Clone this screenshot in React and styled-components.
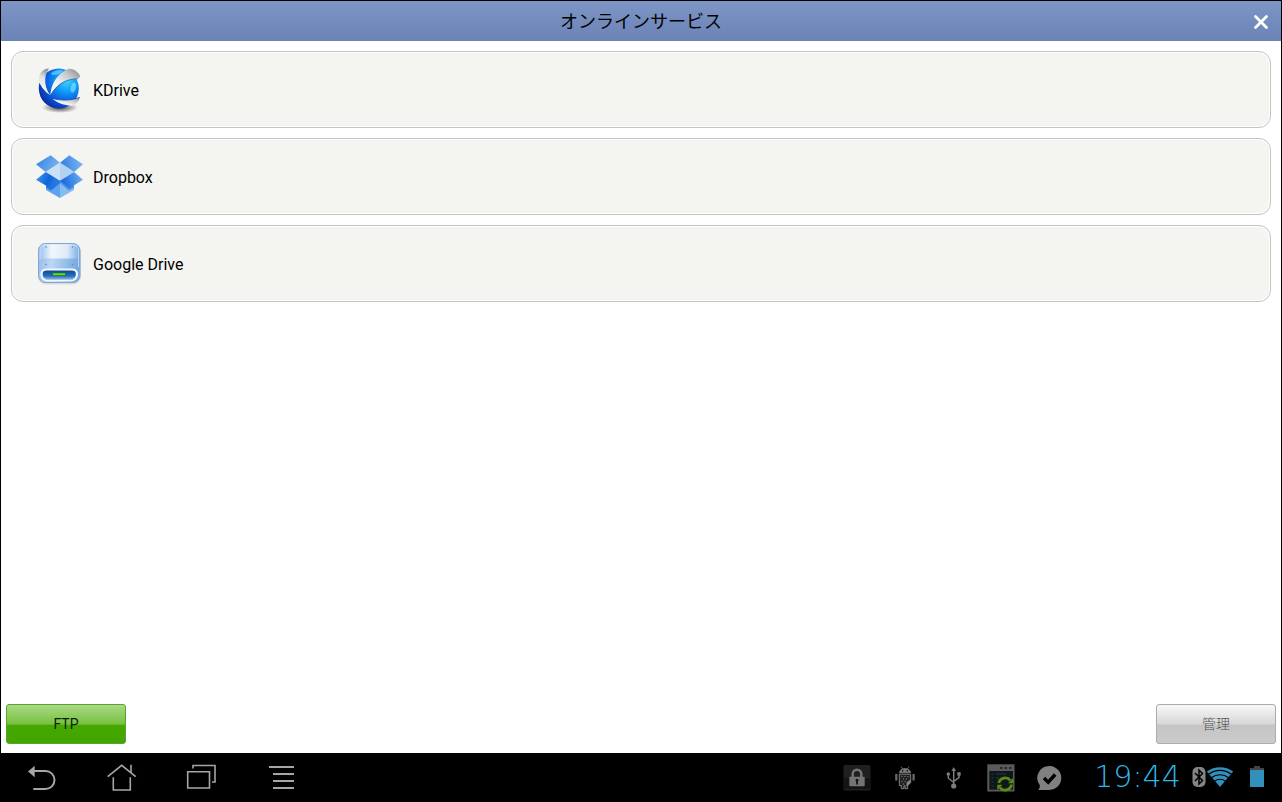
import React from "react";
import styled, { createGlobalStyle } from "styled-components";

const GlobalStyle = createGlobalStyle`
  *, *::before, *::after { box-sizing: border-box; }
  body { margin: 0; background: #000; font-family: Roboto, "Noto Sans CJK JP", sans-serif; }
  button { font-family: inherit; cursor: pointer; }
  button:disabled { cursor: default; }
  svg { display: block; flex: none; }
`;

const Screen = styled.div`
  display: flex;
  flex-direction: column;
  min-height: 100vh;
  border: 1px solid #000;
  background: #fff;
`;

const Header = styled.header`
  display: grid;
  grid-template-columns: 40px 1fr 40px;
  align-items: center;
  height: 40px;
  padding-top: 2px;
  background: linear-gradient(#7e96c5, #6b82b5);
`;

const Title = styled.h1`
  grid-column: 2;
  margin: 0;
  text-align: center;
  font-family: Roboto, "Noto Sans CJK JP", sans-serif;
  font-size: 18px;
  font-weight: 400;
  line-height: 24px;
  color: #000;
`;

const CloseButton = styled.button`
  display: grid;
  place-items: center;
  height: 38px;
  padding: 0;
  border: 0;
  background: none;
`;

const Content = styled.main`
  flex: 1;
  padding: 10px;
`;

const ServiceList = styled.ul`
  display: flex;
  flex-direction: column;
  gap: 10px;
  margin: 0;
  padding: 0;
  list-style: none;
`;

const ServiceCard = styled.button`
  display: flex;
  align-items: center;
  gap: 10px;
  width: 100%;
  height: 77px;
  padding: 0 23px;
  border: 1px solid #c4c4c4;
  border-radius: 12px;
  background: #f4f5f1;
  box-shadow: inset 0 0 0 1px #fff;
  font-size: 16px;
  line-height: 20px;
  color: #000;
  text-align: left;
`;

const ServiceName = styled.span`
  padding-top: 2px;
`;

const Footer = styled.footer`
  display: flex;
  justify-content: space-between;
  padding: 0 5px 9px;
`;

const ActionButton = styled.button`
  width: 120px;
  height: 40px;
  padding: 0;
  border: 1px solid ${(p) => (p.$green ? "#55a52a" : "#acacac")};
  border-radius: 3px;
  background: ${(p) =>
    p.$green
      ? "linear-gradient(#a9da85, #76c03f 51%, #44a800 52%, #42a501)"
      : "linear-gradient(#f8f8f8, #d6d6d6 51%, #c4c4c4 52%, #cbcbcb)"};
  font-size: 14px;
  line-height: 20px;
  font-weight: ${(p) => (p.$green ? 400 : 300)};
  color: ${(p) => (p.$green ? "#0c1f04" : "#555")};
`;

const SystemBar = styled.nav`
  display: flex;
  justify-content: space-between;
  height: 48px;
  background: #000;
`;

const Group = styled.div`
  display: flex;
  align-items: center;
`;

const NavButton = styled.button`
  display: grid;
  place-items: center;
  width: 80px;
  height: 48px;
  padding: 0;
  border: 0;
  background: none;
`;

const StatusSlot = styled.span`
  display: grid;
  place-items: center;
  width: 48px;
`;

const Clock = styled.time`
  width: 119px;
  padding-left: 10px;
  text-align: center;
  font-family: "DejaVu Sans", sans-serif;
  font-size: 30px;
  font-weight: 200;
  line-height: 48px;
  color: #33b5e5;
`;

const Indicators = styled.div`
  display: flex;
  align-items: center;
  padding-right: 16px;
`;

const BatterySlot = styled.span`
  margin-left: 16px;
`;

const LineIcon = ({ children, width = 2 }) => (
  <svg width="32" height="32" viewBox="0 0 32 32" fill="none" stroke="#a6a6a6" strokeWidth={width} aria-hidden="true">
    {children}
  </svg>
);

const KDriveIcon = () => (
  <svg width="48" height="48" viewBox="0 0 48 48" aria-hidden="true">
    <defs>
      <radialGradient id="globe" cx="0.7" cy="0.32" r="0.75">
        <stop offset="0" stopColor="#3fd0ff" />
        <stop offset="0.35" stopColor="#109bf8" />
        <stop offset="0.7" stopColor="#0b5add" />
        <stop offset="1" stopColor="#0a2fa5" />
      </radialGradient>
      <linearGradient id="blade" x1="0" y1="1" x2="1" y2="0">
        <stop offset="0" stopColor="#fff" />
        <stop offset="0.4" stopColor="#eceef0" />
        <stop offset="0.7" stopColor="#c2c4c8" />
        <stop offset="1" stopColor="#808286" />
      </linearGradient>
      <linearGradient id="bladeLeft" x1="0.6" y1="0" x2="0.4" y2="1">
        <stop offset="0" stopColor="#8b8e93" />
        <stop offset="0.35" stopColor="#dfe1e4" />
        <stop offset="1" stopColor="#fff" />
      </linearGradient>
      <radialGradient id="globeShade">
        <stop offset="0" stopColor="#222" stopOpacity="0.85" />
        <stop offset="1" stopColor="#222" stopOpacity="0" />
      </radialGradient>
    </defs>
    <ellipse cx="25" cy="41.500" rx="18" ry="5.500" fill="url(#globeShade)" />
    <circle cx="23.800" cy="22.500" r="20" fill="url(#globe)" />
    <path d="M14 2.600C8 2.500 3.200 8 3.600 14.500c.3 1.800.9 3 1.700 4.200 2.500 4.500 5.700 8 9.700 10.800C11.600 24 9.800 18.500 10.300 12.500 10.700 8.500 12 5.500 14 2.600z" fill="url(#bladeLeft)" />
    <path d="M4.200 17.500c2.500 5 6 8.800 10.500 12" stroke="#0a3ca8" strokeWidth="0.700" fill="none" />
    <path d="M15.400 29C16 18.500 22 7.500 33 3c5-1 9.500 2.500 12.300 7-.3 1.500-1.500 2.300-3.300 2.700C32 12 21.500 17.500 15.400 29z" fill="url(#blade)" />
    <path d="M16.500 28C21.500 19 31 12.800 43 12.700" stroke="#3d6f96" strokeWidth="0.800" fill="none" />
    <path d="M17 32.300c8.500 2.500 20 2.300 28-1-1 4-3.500 6.800-7 8.200-7 .5-15-1.500-21-7.200z" fill="url(#blade)" />
    <path d="M17 32.300c8.500 2.500 19 2.300 27.500-.8" stroke="#0647b4" strokeWidth="0.800" fill="none" />
    <ellipse cx="38.500" cy="21.500" rx="2.500" ry="5" fill="#8be9ff" opacity="0.6" transform="rotate(15 38 21)" />
    <ellipse cx="22" cy="6.500" rx="6" ry="2" fill="#7de0ff" opacity="0.6" transform="rotate(-14 22 7)" />
  </svg>
);

const DropboxIcon = () => (
  <svg width="48" height="48" viewBox="0 0 48 48" aria-hidden="true">
    <defs>
      <linearGradient id="leafA" x1="0" y1="0.3" x2="1" y2="0.7">
        <stop offset="0" stopColor="#3186e6" />
        <stop offset="1" stopColor="#84b7f0" />
      </linearGradient>
      <linearGradient id="leafB" x1="0" y1="0.5" x2="1" y2="0.4">
        <stop offset="0" stopColor="#2f80df" />
        <stop offset="1" stopColor="#7fb6f3" />
      </linearGradient>
      <linearGradient id="leafC" x1="0" y1="0" x2="1" y2="0.3">
        <stop offset="0" stopColor="#4a98ee" />
        <stop offset="0.6" stopColor="#0e66dc" />
        <stop offset="1" stopColor="#2b7de6" />
      </linearGradient>
      <linearGradient id="leafD" x1="0" y1="0.6" x2="1" y2="0.4">
        <stop offset="0" stopColor="#0c62db" />
        <stop offset="1" stopColor="#70adf2" />
      </linearGradient>
    </defs>
    <path d="M11 32v5l14 8V27.500z" fill="#5ba3ee" />
    <path d="M39 32v5l-14 8V27.500z" fill="#86bbf2" />
    <path d="M11 32v2.500l5 3L25 30v-2.500z" fill="#2673dc" />
    <path d="M39 32v2.500l-5 3L25 30v-2.500z" fill="#4a91e5" />
    <path d="M1 11.300l14.700-9L25 9.700 10.700 19z" fill="url(#leafA)" />
    <path d="M34.300 2.300L48 11.300 39 19 25 9.700z" fill="url(#leafB)" />
    <path d="M25 9.700V27.700L10.700 19z" fill="#c8e0f8" />
    <path d="M25 9.700L39 19l-14 8.700z" fill="#b1d2f5" />
    <path d="M10.700 19L25 27.700l-9.300 7.600L1 26.700z" fill="url(#leafC)" />
    <path d="M39 19l9 7.700-13.700 8.600L25 27.700z" fill="url(#leafD)" />
  </svg>
);

const DriveIcon = () => (
  <svg width="48" height="48" viewBox="0 0 48 48" aria-hidden="true">
    <defs>
      <linearGradient id="driveTop" x1="0" y1="0" x2="1" y2="0">
        <stop offset="0" stopColor="#9cc3ef" />
        <stop offset="0.3" stopColor="#f1f6fc" />
        <stop offset="0.7" stopColor="#dfeaf9" />
        <stop offset="1" stopColor="#7fb0e6" />
      </linearGradient>
      <linearGradient id="driveBody" x1="0" y1="0" x2="1" y2="0.2">
        <stop offset="0" stopColor="#8bb6e8" />
        <stop offset="0.4" stopColor="#bcd7f4" />
        <stop offset="1" stopColor="#78a9e0" />
      </linearGradient>
      <linearGradient id="driveSlot" x1="0" y1="0" x2="0" y2="1">
        <stop offset="0" stopColor="#123f86" />
        <stop offset="0.6" stopColor="#2470c2" />
        <stop offset="1" stopColor="#9cc9f0" />
      </linearGradient>
    </defs>
    <rect x="3" y="5" width="43" height="39.500" rx="8" fill="#000" opacity="0.1" />
    <rect x="3.500" y="3.500" width="41.500" height="39" rx="7" fill="url(#driveBody)" stroke="#7ea6d6" />
    <path d="M5 18.500V10c0-4 2-5.500 5.500-5.500h28c3.500 0 5 1.500 5 5.500v8.500z" fill="url(#driveTop)" />
    <path d="M5 20V10.500C5 7 7 4.800 10.500 4.800h27.500c3.500 0 5.500 2.200 5.500 5.700V27" fill="none" stroke="#fff" strokeOpacity="0.65" strokeWidth="0.800" />
    <g fill="#5688c6">
      <circle cx="11" cy="7" r="0.800" /><circle cx="37.500" cy="7" r="0.800" />
      <circle cx="11" cy="24.500" r="0.800" /><circle cx="37.500" cy="24.500" r="0.800" />
    </g>
    <path d="M12 29.500h24.500c3.700 0 5.500 2 5.500 4.500 0 4-2.500 6.300-6 6.300H12.500c-3.500 0-6-2.300-6-6.300 0-2.500 1.800-4.500 5.500-4.500z" fill="url(#driveSlot)" stroke="#f2f7fd" strokeWidth="2.200" />
    <path d="M10.500 39.500h27.500" stroke="#b9bedb" strokeWidth="1" />
    <rect x="16.500" y="32.800" width="15" height="3.200" rx="1.500" fill="#176a50" />
    <rect x="17.700" y="33.300" width="12.600" height="2" rx="0.800" fill="#5be314" />
  </svg>
);

const CloseIcon = () => (
  <svg width="16" height="16" viewBox="0 0 16 16" aria-hidden="true">
    <path d="M2.500 2.500l11 11M13.500 2.500l-11 11" stroke="#fff" strokeWidth="2.800" strokeLinecap="round" />
  </svg>
);

const StatusIcon = ({ children }) => (
  <svg width="32" height="32" viewBox="0 0 32 32" aria-hidden="true">{children}</svg>
);

const LockIcon = () => (
  <StatusIcon>
    <rect x="2.500" y="4" width="27" height="25.500" rx="1.500" fill="#202020" />
    <path d="M3 17h26v11H3z" fill="#141414" />
    <path d="M11.700 16.500V13a4.300 4.300 0 0 1 8.600 0v3.500" fill="none" stroke="#747474" strokeWidth="2.400" />
    <rect x="8.300" y="15.700" width="15.400" height="9.600" rx="0.800" fill="#747474" />
    <path d="M16 17.700a1.500 1.500 0 0 1 .9 2.700v3h-1.800v-3a1.500 1.500 0 0 1 .9-2.700z" fill="#151515" />
  </StatusIcon>
);

const AndroidIcon = () => (
  <StatusIcon>
    <path d="M10.300 11.700c.3-2.500 2.700-4.200 5.700-4.200s5.400 1.700 5.700 4.200zM12 5.500l1.700 2.700M20 5.500l-1.700 2.700" fill="#777" stroke="#777" strokeWidth="0.800" />
    <circle cx="13.700" cy="9.800" r="0.700" /><circle cx="18.300" cy="9.800" r="0.700" />
    <path d="M6.200 13h2.200v6.500H6.200zM23.500 13h2.200v6.500h-2.200z" fill="#6c6c6c" />
    <path d="M10.300 13.200h11.400v8.300l-3 3v3.200h-2.700v-3h-1v3h-2.700v-3.200h-2z" fill="#222" stroke="#808080" />
    <g fill="#858585">
      <path d="M12.500 15h1v1h-1zM15.500 15h1v1h-1zM18.500 15h1v1h-1zM14 17.500h1v1h-1zM17 17.500h1v1h-1zM12.500 20h1v1h-1zM15.500 20h1v1h-1zM14 22.500h1v1h-1zM17.500 21.500l4-3v3.500l-3 3h-1z" />
    </g>
  </StatusIcon>
);

const UsbIcon = () => (
  <StatusIcon>
    <path d="M16.700 8v17M11.300 13.500V17l5.400 4.500M22 13v3.500l-5.300 3.800" fill="none" stroke="#7d7d7d" strokeWidth="1.500" />
    <path d="M16.700 6l2.300 4h-4.600z" fill="#7d7d7d" />
    <circle cx="16.700" cy="25" r="2.600" fill="#7d7d7d" />
    <circle cx="11.300" cy="13" r="1.800" fill="#7d7d7d" />
    <path d="M20.300 11.200h3.400v3.400h-3.400z" fill="#7d7d7d" />
  </StatusIcon>
);

const SyncWindowIcon = () => (
  <StatusIcon>
    <rect x="2.300" y="3.300" width="27.200" height="27.200" fill="#5a5a5a" />
    <rect x="4.300" y="10" width="23.700" height="18.700" fill="#10171c" />
    <path d="M15 6h2.500v2H15zM19.500 6H22v2h-2.500zM24 6h2.500v2H24z" fill="#292929" />
    <path d="M6.500 13h2M6.500 17h2M6.500 21h2M6.500 25h2M11 13h10M11 17h3" stroke="#283640" strokeWidth="1.200" />
    <path d="M13.800 22a6.500 6.500 0 0 1 11.500-2.600M26.500 23.500a6.500 6.500 0 0 1-11.600 3" fill="none" stroke="#5b8d13" strokeWidth="2.800" />
    <path d="M28.200 17v5.200h-5.200zM12.300 29v-5.200h5.200z" fill="#5b8d13" />
  </StatusIcon>
);

const CheckBubbleIcon = () => (
  <StatusIcon>
    <path d="M17 5a12 12 0 1 1-1.500 24H5.200c1.200-1.200 1.800-2.600 1.600-4.800A12 12 0 0 1 17 5z" fill="#808080" />
    <path d="M11 17l4.200 4.200 7-7.700" fill="none" stroke="#000" strokeWidth="3.400" />
  </StatusIcon>
);

const BluetoothIcon = () => (
  <svg width="14" height="22" viewBox="0 0 14 22" aria-hidden="true">
    <rect x="0.500" y="1" width="13" height="20" rx="5" fill="#858585" />
    <path d="M3 7l7.500 7.500L7 18V4l3.500 3.500L3 15" fill="none" stroke="#000" strokeWidth="1.500" />
  </svg>
);

const WifiIcon = () => (
  <svg width="28" height="22" viewBox="0 0 28 22" aria-hidden="true">
    <path d="M14 21L.8 5.500C8.500-.3 19.500-.3 27.200 5.500z" fill="#3191bb" />
    <path d="M2.500 8.300c7-5.200 16-5.200 23 0M5.300 11.800c5.300-4 12.100-4 17.400 0M8.300 15.300c3.500-2.500 7.900-2.500 11.400 0" fill="none" stroke="#000" strokeWidth="1.100" />
  </svg>
);

const BatteryIcon = () => (
  <svg width="15" height="22" viewBox="0 0 15 22" aria-hidden="true">
    <path d="M4 0h6v2h4v3H0V2h4z" fill="#444" />
    <path d="M0 4h14v17H0z" fill="#3191bb" />
  </svg>
);

const services = [
  { name: "KDrive", Icon: KDriveIcon },
  { name: "Dropbox", Icon: DropboxIcon },
  { name: "Google Drive", Icon: DriveIcon },
];

const statusIcons = [LockIcon, AndroidIcon, UsbIcon, SyncWindowIcon, CheckBubbleIcon];

export default function App() {
  return (
    <>
      <GlobalStyle />
      <Screen lang="ja">
        <Header>
          <Title>オンラインサービス</Title>
          <CloseButton type="button" aria-label="閉じる"><CloseIcon /></CloseButton>
        </Header>
        <Content>
          <ServiceList>
            {services.map(({ name, Icon }) => (
              <li key={name}>
                <ServiceCard type="button">
                  <Icon />
                  <ServiceName>{name}</ServiceName>
                </ServiceCard>
              </li>
            ))}
          </ServiceList>
        </Content>
        <Footer>
          <ActionButton type="button" $green>FTP</ActionButton>
          <ActionButton type="button" disabled>管理</ActionButton>
        </Footer>
        <SystemBar>
          <Group>
            <NavButton type="button" aria-label="戻る">
              <LineIcon>
                <path d="M9 10h11.500a9 9 0 0 1 0 18H8.300" />
                <path d="M3 10.500l6.700-5.800v11.600z" fill="#a6a6a6" stroke="none" />
              </LineIcon>
            </NavButton>
            <NavButton type="button" aria-label="ホーム">
              <LineIcon width={1.6}>
                <path d="M2.700 15.700l14-11.400 14 11.400M26 3.700v7.500M8.300 16.300V29h17V16.300" />
              </LineIcon>
            </NavButton>
            <NavButton type="button" aria-label="最近使ったアプリ">
              <LineIcon width={1.6}>
                <path d="M2.700 10.700H24.500V27H2.700zM8 7.500V4.500h22V21h-3" />
              </LineIcon>
            </NavButton>
            <NavButton type="button" aria-label="メニュー">
              <LineIcon>
                <path d="M4 6h25M8 13h21M8 20h21M8 27h21" />
              </LineIcon>
            </NavButton>
          </Group>
          <Group>
            {statusIcons.map((Icon, i) => (
              <StatusSlot key={i}><Icon /></StatusSlot>
            ))}
            <Clock dateTime="19:44">19:44</Clock>
            <Indicators>
              <BluetoothIcon />
              <WifiIcon />
              <BatterySlot><BatteryIcon /></BatterySlot>
            </Indicators>
          </Group>
        </SystemBar>
      </Screen>
    </>
  );
}
